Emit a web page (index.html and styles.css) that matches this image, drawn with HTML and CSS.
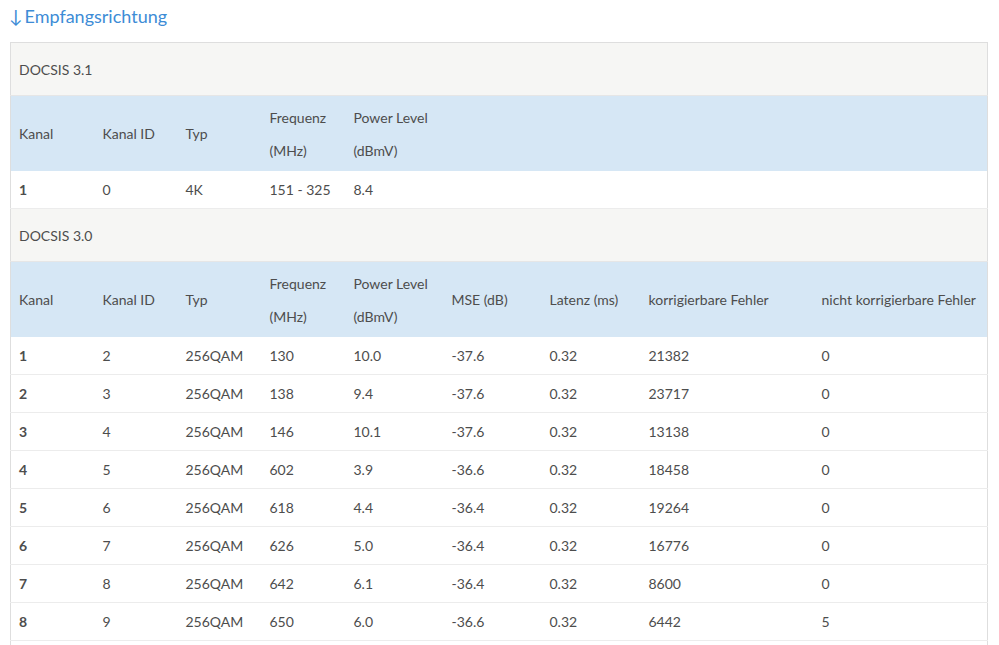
FILE: index.html
```html
<!DOCTYPE html>
<html lang="de">
<head>
<meta charset="utf-8">
<title>Empfangsrichtung</title>
<link rel="stylesheet" href="styles.css">
</head>
<body>
<h2 class="title"><span class="arrow">↓</span><span class="label">Empfangsrichtung</span></h2>
<table class="channels">
  <colgroup>
    <col class="c1"><col class="c2"><col class="c3"><col class="c4"><col class="c5">
    <col class="c6"><col class="c7"><col class="c8"><col class="c9">
  </colgroup>
  <tbody>
    <tr class="group"><td colspan="9">DOCSIS 3.1</td></tr>
    <tr class="head">
      <th>Kanal</th><th>Kanal ID</th><th>Typ</th><th>Frequenz<br>(MHz)</th><th>Power Level<br>(dBmV)</th><th colspan="4"></th>
    </tr>
    <tr class="row"><td class="b">1</td><td>0</td><td>4K</td><td>151 - 325</td><td>8.4</td><td colspan="4"></td></tr>
    <tr class="group"><td colspan="9">DOCSIS 3.0</td></tr>
    <tr class="head">
      <th>Kanal</th><th>Kanal ID</th><th>Typ</th><th>Frequenz<br>(MHz)</th><th>Power Level<br>(dBmV)</th><th>MSE (dB)</th><th>Latenz (ms)</th><th>korrigierbare Fehler</th><th>nicht korrigierbare Fehler</th>
    </tr>
    <tr class="row"><td class="b">1</td><td>2</td><td>256QAM</td><td>130</td><td>10.0</td><td>-37.6</td><td>0.32</td><td>21382</td><td>0</td></tr>
    <tr class="row"><td class="b">2</td><td>3</td><td>256QAM</td><td>138</td><td>9.4</td><td>-37.6</td><td>0.32</td><td>23717</td><td>0</td></tr>
    <tr class="row"><td class="b">3</td><td>4</td><td>256QAM</td><td>146</td><td>10.1</td><td>-37.6</td><td>0.32</td><td>13138</td><td>0</td></tr>
    <tr class="row"><td class="b">4</td><td>5</td><td>256QAM</td><td>602</td><td>3.9</td><td>-36.6</td><td>0.32</td><td>18458</td><td>0</td></tr>
    <tr class="row"><td class="b">5</td><td>6</td><td>256QAM</td><td>618</td><td>4.4</td><td>-36.4</td><td>0.32</td><td>19264</td><td>0</td></tr>
    <tr class="row"><td class="b">6</td><td>7</td><td>256QAM</td><td>626</td><td>5.0</td><td>-36.4</td><td>0.32</td><td>16776</td><td>0</td></tr>
    <tr class="row"><td class="b">7</td><td>8</td><td>256QAM</td><td>642</td><td>6.1</td><td>-36.4</td><td>0.32</td><td>8600</td><td>0</td></tr>
    <tr class="row"><td class="b">8</td><td>9</td><td>256QAM</td><td>650</td><td>6.0</td><td>-36.6</td><td>0.32</td><td>6442</td><td>5</td></tr>
    <tr class="row"><td colspan="9"></td></tr>
  </tbody>
</table>
</body>
</html>
```

FILE: styles.css
```css
html, body {
  margin: 0;
  padding: 0;
  background: #fff;
}
body {
  padding: 0 12px 0 10px;
  font-family: Lato, "Noto Sans", sans-serif;
  font-size: 14px;
  color: #4d4d4d;
}
.title {
  margin: 0;
  padding-top: 5px;
  height: 42px;
  box-sizing: border-box;
  display: flex;
  align-items: baseline;
  gap: 2px;
  font-size: 18px;
  font-weight: 400;
  line-height: 22px;
  color: #3d8cd6;
}
.arrow {
  margin-left: -1px;
}
.channels {
  width: 977px;
  table-layout: fixed;
  border-collapse: collapse;
  border: 1px solid #dedede;
}
.c1 { width: 84px; }
.c2 { width: 83px; }
.c3 { width: 84px; }
.c4 { width: 84px; }
.c5 { width: 98px; }
.c6 { width: 98px; }
.c7 { width: 99px; }
.c8 { width: 173px; }
.c9 { width: 174px; }
.channels td, .channels th {
  text-align: left;
  font-weight: 400;
  padding: 0 8px;
  white-space: nowrap;
  vertical-align: middle;
}
.group td {
  background: #f6f6f4;
  height: 52px;
  border-bottom: 1px solid #e6e6e6;
}
.head th {
  background: #d6e7f5;
  height: 75px;
  line-height: 33px;
}
.row td {
  height: 37px;
  border-bottom: 1px solid #ececec;
}
.row td.b {
  font-weight: 700;
}
```
